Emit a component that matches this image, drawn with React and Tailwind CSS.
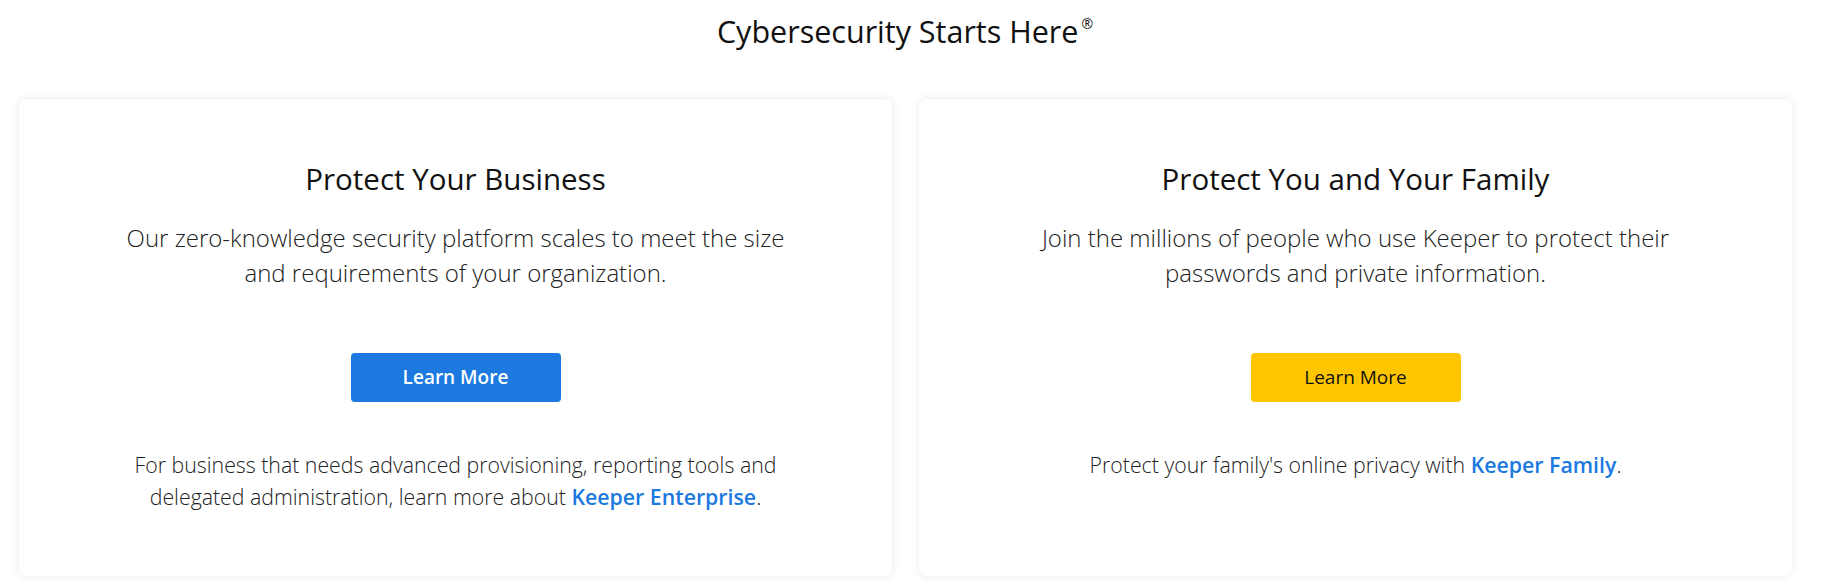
import React from "react";

function Card({ title, desc, button, footer }) {
  return (
    <div className="bg-white rounded-[8px] shadow-[0_0_10px_rgba(0,0,0,0.09)] flex flex-col items-center text-center pt-[62px] pb-[63px]">
      <h2 className="text-[29.5px] leading-[36px] text-[#111] font-normal">{title}</h2>
      <p className="mt-[23px] text-[24px] leading-[35px] text-[#222] font-light">{desc}</p>
      <div className="mt-[63px]">{button}</div>
      <p className="mt-[47px] text-[21.3px] leading-[32px] text-[#222] font-light">{footer}</p>
    </div>
  );
}

export default function App() {
  return (
    <div
      className="w-[1842px] h-[582px] overflow-hidden bg-white"
      style={{ fontFamily: "'Open Sans', 'Noto Sans', Arial, sans-serif" }}
    >
      <div className="w-[1810px] pt-[13px]">
        <h1 className="text-center text-[30.5px] leading-[36px] text-[#111] font-normal">
          Cybersecurity Starts Here
          <span className="text-[14px] leading-none ml-[3px] align-top relative top-[4px]">®</span>
        </h1>
        <div className="mt-[50px] pl-[19px] grid grid-cols-[873px_873px] gap-[27px]">
          <Card
            title="Protect Your Business"
            desc={
              <>
                Our zero-knowledge security platform scales to meet the size
                <br />
                and requirements of your organization.
              </>
            }
            button={
              <button className="w-[210px] h-[49px] rounded-[4px] bg-[#1b79e0] text-white text-[19px] font-semibold">
                Learn More
              </button>
            }
            footer={
              <>
                For business that needs advanced provisioning, reporting tools and
                <br />
                delegated administration, learn more about{" "}
                <a className="text-[#1b79e0] font-semibold">Keeper Enterprise</a>.
              </>
            }
          />
          <Card
            title="Protect You and Your Family"
            desc={
              <>
                Join the millions of people who use Keeper to protect their
                <br />
                passwords and private information.
              </>
            }
            button={
              <button className="w-[210px] h-[49px] rounded-[4px] bg-[#ffc600] text-[#111] text-[19px] font-normal">
                Learn More
              </button>
            }
            footer={
              <>
                Protect your family's online privacy with{" "}
                <a className="text-[#1b79e0] font-semibold">Keeper Family</a>.
              </>
            }
          />
        </div>
      </div>
    </div>
  );
}
